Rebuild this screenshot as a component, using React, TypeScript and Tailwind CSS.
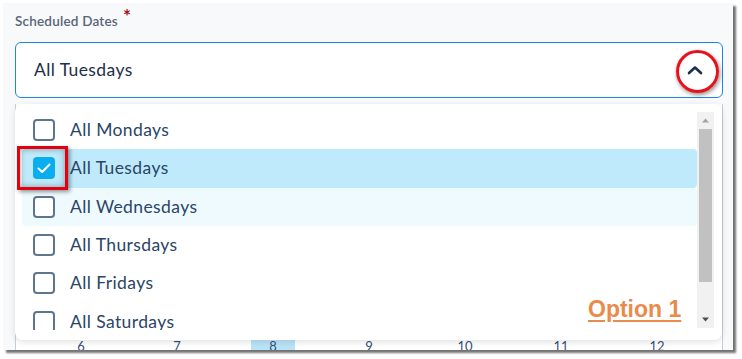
const options = [
  { label: "All Mondays", checked: false },
  { label: "All Tuesdays", checked: true },
  { label: "All Wednesdays", checked: false },
  { label: "All Thursdays", checked: false },
  { label: "All Fridays", checked: false },
  { label: "All Saturdays", checked: false },
  { label: "All Sundays", checked: false },
];

const weeks = [
  ["", "", "", "", "", "", ""],
  ["", "", "", "", "", "", ""],
  ["", "", "1", "2", "3", "4", "5"],
  ["6", "7", "8", "9", "10", "11", "12"],
];

function Checkbox({ checked }: { checked: boolean }) {
  if (checked) {
    return (
      <div className="w-[22px] h-[22px] rounded-[4px] bg-[#0aaef0] flex items-center justify-center">
        <svg width="14" height="11" viewBox="0 0 14 11" fill="none">
          <polyline points="1.5,5.5 5.2,9 12.5,1.5" stroke="white" strokeWidth="2" strokeLinecap="round" strokeLinejoin="round" />
        </svg>
      </div>
    );
  }
  return <div className="w-[22px] h-[22px] rounded-[4px] border-2 border-[#5e7591] bg-white" />;
}

function Scrollbar() {
  return (
    <div className="w-[17px] h-[216px] mt-[1px] bg-[#f1f1f1] flex flex-col">
      <div className="h-[17px] flex items-center justify-center">
        <svg width="7" height="5" viewBox="0 0 7 5">
          <polygon points="3.5,0.5 7,4.5 0,4.5" fill="#a3a3a3" />
        </svg>
      </div>
      <div className="mx-[2px] h-[153px] bg-[#c1c1c1]" />
      <div className="flex-1" />
      <div className="h-[17px] flex items-center justify-center">
        <svg width="7" height="5" viewBox="0 0 7 5">
          <polygon points="0,0.5 7,0.5 3.5,4.5" fill="#505050" />
        </svg>
      </div>
    </div>
  );
}

export default function App() {
  return (
    <div className="w-[742px] h-[359px] bg-white p-[3px]" style={{ fontFamily: "Lato, 'Open Sans', sans-serif" }}>
      <div className="relative w-[730px] h-[347px] bg-[#f7f9fb] overflow-hidden shadow-[3px_3px_2px_rgba(0,0,0,0.55)] pl-[12px] pr-[10px] pt-[10px]">
        <div className="h-[16px] flex items-start">
          <span className="text-[13.5px] leading-[16px] font-semibold tracking-[0.2px] text-[#5a6577]">Scheduled Dates</span>
          <span className="ml-[5px] -mt-[5px] text-[19px] leading-[16px] font-bold text-[#a80f16]">*</span>
        </div>

        <div className="mt-[13px] h-[56px] bg-white border border-[#1d86e2] rounded-[6px] flex items-center justify-between pl-[18px] pr-[18px]">
          <span className="text-[17.5px] tracking-[0.4px] text-[#1d2f48]">All Tuesdays</span>
          <svg width="16" height="10" viewBox="0 0 16 10" fill="none" className="mr-[1px]">
            <polyline points="2,8 8,2.5 14,8" stroke="#1b2f4d" strokeWidth="2.6" strokeLinecap="round" strokeLinejoin="round" />
          </svg>
        </div>

        {/* calendar behind the open list */}
        <div className="mt-[6px] h-[400px] bg-white border-x border-[#c9ced6]">
          <div className="h-[55px]" />
          <div className="h-[36px]" />
          {weeks.map((week, i) => (
            <div key={i} className="h-[48px] grid grid-cols-7 px-[17px] text-[13px] text-[#35507a]">
              {week.map((d, j) => (
                <div key={j} className="flex justify-center">
                  <div className={"w-[44px] h-[30px] leading-[13px] pt-[1px] text-center " + (d === "8" ? "bg-[#b9e3f8]" : "")}>
                    {d}
                  </div>
                </div>
              ))}
            </div>
          ))}
        </div>

        {/* open dropdown list */}
        <div className="absolute left-[12px] top-[101px] w-[707px] h-[236px] bg-white rounded-[8px] shadow-[0_2px_6px_rgba(0,0,0,0.12)] flex pl-[7px] pt-[7px]">
          <div className="w-[675px] h-[219px] overflow-hidden">
            {options.map((o, i) => (
              <div
                key={o.label}
                className={
                  "h-[38.3px] flex items-center pl-[11px] gap-[15px] rounded-[4px] " +
                  (o.checked ? "bg-[#bfeafc]" : i === 2 ? "bg-[#effaff]" : "")
                }
              >
                <Checkbox checked={o.checked} />
                <span className="text-[17.5px] tracking-[0.4px] text-[#2a4566]">{o.label}</span>
              </div>
            ))}
          </div>
          <Scrollbar />
        </div>

        {/* annotations */}
        <div className="absolute left-[673px] top-[47px] w-[43px] h-[43px] rounded-full border-[3px] border-[#e8101a] shadow-[1px_2px_4px_rgba(0,0,0,0.45)]" />
        <div className="absolute left-[14px] top-[143px] w-[51px] h-[44px] border-[3px] border-[#e3000f] shadow-[2px_2px_4px_rgba(0,0,0,0.4),inset_0_0_6px_rgba(0,0,0,0.35)]" />
        <div
          className="absolute left-[585px] top-[289px] text-[23px] font-bold text-[#ea8a4b] underline underline-offset-[3px] decoration-[2px]"
          style={{ fontFamily: "'Liberation Sans', Arial, sans-serif" }}
        >
          Option 1
        </div>
      </div>
    </div>
  );
}
